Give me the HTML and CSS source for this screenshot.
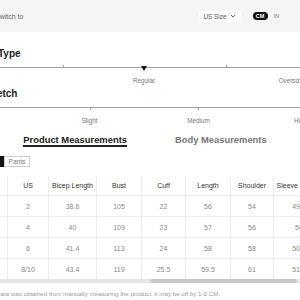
FILE: index.html
```html
<!DOCTYPE html>
<html lang="en">
<head>
  <meta charset="UTF-8" />
  <meta name="viewport" content="width=device-width, initial-scale=1.0"/>
  <title>Size Guide</title>
  <link rel="stylesheet" href="styles.css">
</head>
<body>

  <div class="page">

    <!-- Unit switch bar -->
    <div class="switch-bar">
      <span class="switch-label">Switch to</span>
      <div class="switch-right">
        <div class="size-select">
          US Size
          <svg width="6" height="4" viewBox="0 0 6 4"><path d="M0.8 0.8 L3 3 L5.2 0.8" fill="none" stroke="#555" stroke-width="0.9"/></svg>
        </div>
        <span class="unit unit-active">CM</span>
        <span class="unit">IN</span>
      </div>
    </div>

    <!-- Fit Type -->
    <div class="section section-first">
      <h3>Fit Type</h3>
      <div class="scale">
        <div class="scale-line"></div>
        <span class="tick" style="left: 25%"></span>
        <span class="tick" style="left: 75%"></span>
        <span class="marker" style="left: 50%"></span>
        <span class="scale-label label-start">Close</span>
        <span class="scale-label" style="left: 50%">Regular</span>
        <span class="scale-label label-end">Oversized</span>
      </div>
    </div>

    <!-- Stretch -->
    <div class="section section-second">
      <h3>Stretch</h3>
      <div class="scale">
        <div class="scale-line"></div>
        <span class="tick tick-low" style="left: 33.3%"></span>
        <span class="tick tick-low" style="left: 66.7%"></span>
        <span class="scale-label label-start">Non</span>
        <span class="scale-label" style="left: 33.3%">Slight</span>
        <span class="scale-label" style="left: 66.7%">Medium</span>
        <span class="scale-label label-end">High</span>
      </div>
    </div>

    <!-- Tabs -->
    <div class="tabs">
      <span class="tab tab-active">Product Measurements</span>
      <span class="tab">Body Measurements</span>
    </div>

    <div class="filters">
      <span class="filter filter-active">Tops</span>
      <span class="filter">Pants</span>
    </div>

    <!-- Measurements table -->
    <div class="table-wrap">
      <table class="size-table">
        <thead>
          <tr>
            <th>Size</th><th>US</th><th>Bicep Length</th><th>Bust</th><th>Cuff</th><th>Length</th><th>Shoulder</th><th>Sleeve Length</th>
          </tr>
        </thead>
        <tbody>
          <tr><td>XS</td><td>2</td><td>38.6</td><td>105</td><td>22</td><td>56</td><td>54</td><td>49.5</td></tr>
          <tr><td>S</td><td>4</td><td>40</td><td>109</td><td>23</td><td>57</td><td>56</td><td>50</td></tr>
          <tr><td>M</td><td>6</td><td>41.4</td><td>113</td><td>24</td><td>58</td><td>58</td><td>50.5</td></tr>
          <tr><td>L</td><td>8/10</td><td>43.4</td><td>119</td><td>25.5</td><td>59.5</td><td>61</td><td>51.5</td></tr>
        </tbody>
      </table>
    </div>
    <div class="scrollbar"><div class="scroll-thumb"></div></div>

    <p class="note">Data was obtained from manually measuring the product, it may be off by 1-2 CM.</p>
  </div>

</body>
</html>
```

FILE: styles.css
```css
body {
  margin: 0;
  overflow: hidden;
  background: #fff;
  font-family: 'Liberation Sans', Arial, sans-serif;
}
.page {
  width: 370px;
  margin-left: -40px;
}
.switch-bar {
  height: 32px;
  background: #f5f5f5;
  display: flex;
  align-items: center;
  padding: 0 51px 0 35px;
}
.switch-label {
  font-size: 7px;
  color: #666;
}
.switch-right {
  margin-left: auto;
  display: flex;
  align-items: center;
}
.size-select {
  width: 42px;
  height: 11px;
  box-sizing: border-box;
  background: #fff;
  border-radius: 3px;
  font-size: 6.4px;
  color: #555;
  display: flex;
  align-items: center;
  justify-content: center;
  gap: 3px;
  margin-right: 12px;
}
.unit {
  font-size: 5.5px;
  color: #777;
}
.unit-active {
  background: #111;
  color: #fff;
  font-weight: bold;
  width: 15px;
  height: 8px;
  line-height: 8px;
  text-align: center;
  border-radius: 4px;
  margin-right: 6px;
}
.section h3 {
  margin: 0;
  padding-left: 23px;
  font-size: 10px;
  line-height: 12px;
  color: #222;
}
.section-first {
  margin-top: 16px;
}
.section-second {
  margin-top: 2px;
}
.scale {
  position: relative;
  height: 26px;
  margin: 0 23px 0 21px;
}
.scale-line {
  position: absolute;
  left: -30px;
  right: -30px;
  top: 6.5px;
  height: 1px;
  background: #a0a0a0;
}
.tick {
  position: absolute;
  top: 5px;
  width: 1px;
  height: 3px;
  background: #999;
}
.tick-low {
  top: 7px;
}
.marker {
  position: absolute;
  top: 6px;
  margin-left: -3px;
  width: 0;
  height: 0;
  border-left: 3.5px solid transparent;
  border-right: 3.5px solid transparent;
  border-top: 5px solid #1a1a1a;
}
.scale-label {
  position: absolute;
  top: 17px;
  transform: translateX(-50%);
  font-size: 6.3px;
  line-height: 8px;
  color: #777;
  white-space: nowrap;
}
.scale-label.label-start {
  left: 0;
  transform: none;
}
.scale-label.label-end {
  right: 0;
  transform: none;
}
.tabs {
  display: flex;
  justify-content: center;
  gap: 48px;
  margin-top: 9px;
}
.tab {
  font-size: 9.4px;
  line-height: 10px;
  font-weight: bold;
  color: #777;
}
.tab-active {
  color: #222;
  border-bottom: 2px solid #222;
}
.filters {
  display: flex;
  padding-left: 21px;
  margin-top: 9px;
}
.filter {
  height: 11px;
  box-sizing: border-box;
  border: 1px solid #ccc;
  padding: 0 3.5px;
  font-size: 6.6px;
  line-height: 9px;
  color: #777;
}
.filter-active {
  background: #111;
  border-color: #111;
  color: #fff;
  width: 23px;
}
.table-wrap {
  margin: 9px 0 0 8px;
  overflow: hidden;
}
.size-table {
  border-collapse: collapse;
  white-space: nowrap;
}
.size-table th,
.size-table td {
  border-right: 1px solid #ececec;
  border-bottom: 1px solid #ececec;
  text-align: center;
  padding: 0;
  font-size: 7px;
}
.size-table th {
  height: 19px;
  color: #333;
  font-weight: normal;
}
.size-table td {
  height: 20px;
  color: #888;
}
.size-table th:nth-child(1) { width: 39px; }
.size-table th:nth-child(2) { width: 40px; }
.size-table th:nth-child(3) { width: 47px; }
.size-table th:nth-child(4) { width: 44px; }
.size-table th:nth-child(5) { width: 43px; }
.size-table th:nth-child(6) { width: 44px; }
.size-table th:nth-child(7) { width: 42px; }
.size-table th:nth-child(8) { width: 50px; }
.size-table tr:last-child td {
  border-bottom: none;
}
.scrollbar {
  height: 4px;
  margin-left: 8px;
  background: #e6e6e6;
  border-radius: 2px;
}
.scroll-thumb {
  height: 4px;
  width: 147px;
  margin-left: 182px;
  background: #c6c6c6;
  border-radius: 2px;
}
.note {
  margin: 7px 0 0;
  padding-left: 36px;
  font-size: 6.2px;
  line-height: 8px;
  color: #999;
  white-space: nowrap;
}
```
